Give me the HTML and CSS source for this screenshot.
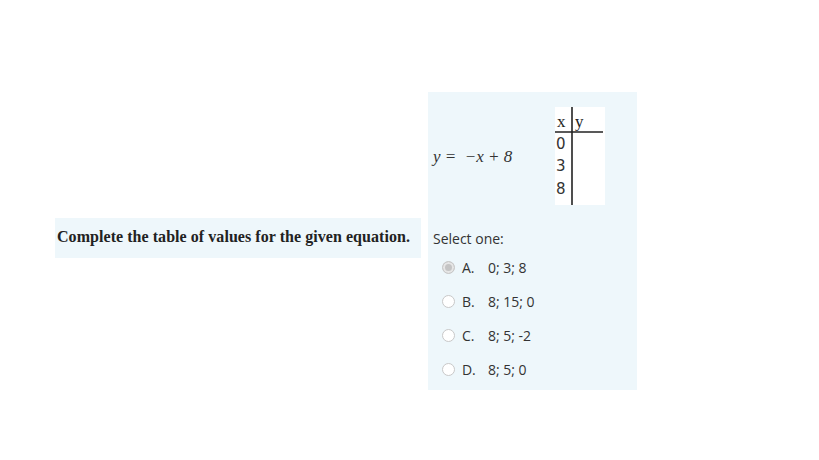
FILE: index.html
```html
<!DOCTYPE html>
<html>
  <head>
    <meta charset="utf-8">
    <title>Quiz question</title>
    <link rel="stylesheet" href="styles.css">
  </head>
  <body>
    <div class="question">
      <div class="qtext">Complete the table of values for the given equation.</div>
      <div class="answerbox">
        <div class="equation">
          <span class="formula">y&nbsp;=&nbsp; &minus;x + 8</span>
          <svg class="xytable" width="50" height="98" viewBox="0 0 50 98">
            <rect x="0" y="0" width="50" height="98" fill="#fff"/>
            <line x1="17" y1="0" x2="17" y2="98" stroke="#222" stroke-width="1.6"/>
            <line x1="0" y1="25" x2="48" y2="25" stroke="#222" stroke-width="1.6"/>
            <text x="2" y="20" font-family="Liberation Serif" font-size="17" fill="#222">x</text>
            <text x="20" y="20" font-family="Liberation Serif" font-size="17" fill="#222">y</text>
            <text x="1" y="42" font-family="DejaVu Sans" font-size="15" fill="#333">0</text>
            <text x="1" y="64" font-family="DejaVu Sans" font-size="15" fill="#333">3</text>
            <text x="1" y="87" font-family="DejaVu Sans" font-size="15" fill="#333">8</text>
          </svg>
        </div>
        <div class="prompt">Select one:</div>
        <div class="options">
          <label class="option"><span class="radio checked"></span><span class="letter">A.</span><span>0; 3; 8</span></label>
          <label class="option"><span class="radio"></span><span class="letter">B.</span><span>8; 15; 0</span></label>
          <label class="option"><span class="radio"></span><span class="letter">C.</span><span>8; 5; -2</span></label>
          <label class="option"><span class="radio"></span><span class="letter">D.</span><span>8; 5; 0</span></label>
        </div>
      </div>
    </div>
  </body>
</html>
```
FILE: styles.css
```css
html {
  font-family: 'Open Sans', 'Noto Sans', sans-serif;
}
body {
  margin: 0;
  background: #fff;
}
.question {
  display: flex;
  align-items: center;
  gap: 7px;
  padding-top: 92px;
  padding-left: 55px;
}
.qtext {
  background: #eef7fb;
  font-family: 'Liberation Serif', serif;
  font-weight: bold;
  font-size: 16px;
  letter-spacing: 0.05px;
  color: #222;
  padding: 10px 11px 12px 2px;
  margin-top: -6px;
}
.answerbox {
  background: #eef7fb;
  width: 204px;
  height: 298px;
  padding-left: 5px;
  color: #333;
  font-size: 14px;
}
.equation {
  display: flex;
  align-items: center;
  padding-top: 15px;
}
.formula {
  font-family: 'Liberation Serif', serif;
  font-style: italic;
  font-size: 17px;
  color: #333;
  width: 122px;
  margin-top: 2px;
}
.xytable {
  display: block;
}
.prompt {
  margin-top: 25px;
  line-height: 18px;
}
.options {
  padding-top: 9px;
}
.option {
  display: flex;
  align-items: center;
  height: 34px;
  padding-left: 9px;
  margin-top: -7px;
  margin-bottom: 7px;
}
.radio {
  width: 11px;
  height: 11px;
  border: 1px solid #c8c8c8;
  border-radius: 50%;
  background: #fff;
  margin-right: 7px;
  box-sizing: content-box;
}
.radio.checked {
  background: #c4c4c4;
  box-shadow: inset 0 0 0 2px #e6e6e6;
}
.letter {
  width: 26px;
}
```
